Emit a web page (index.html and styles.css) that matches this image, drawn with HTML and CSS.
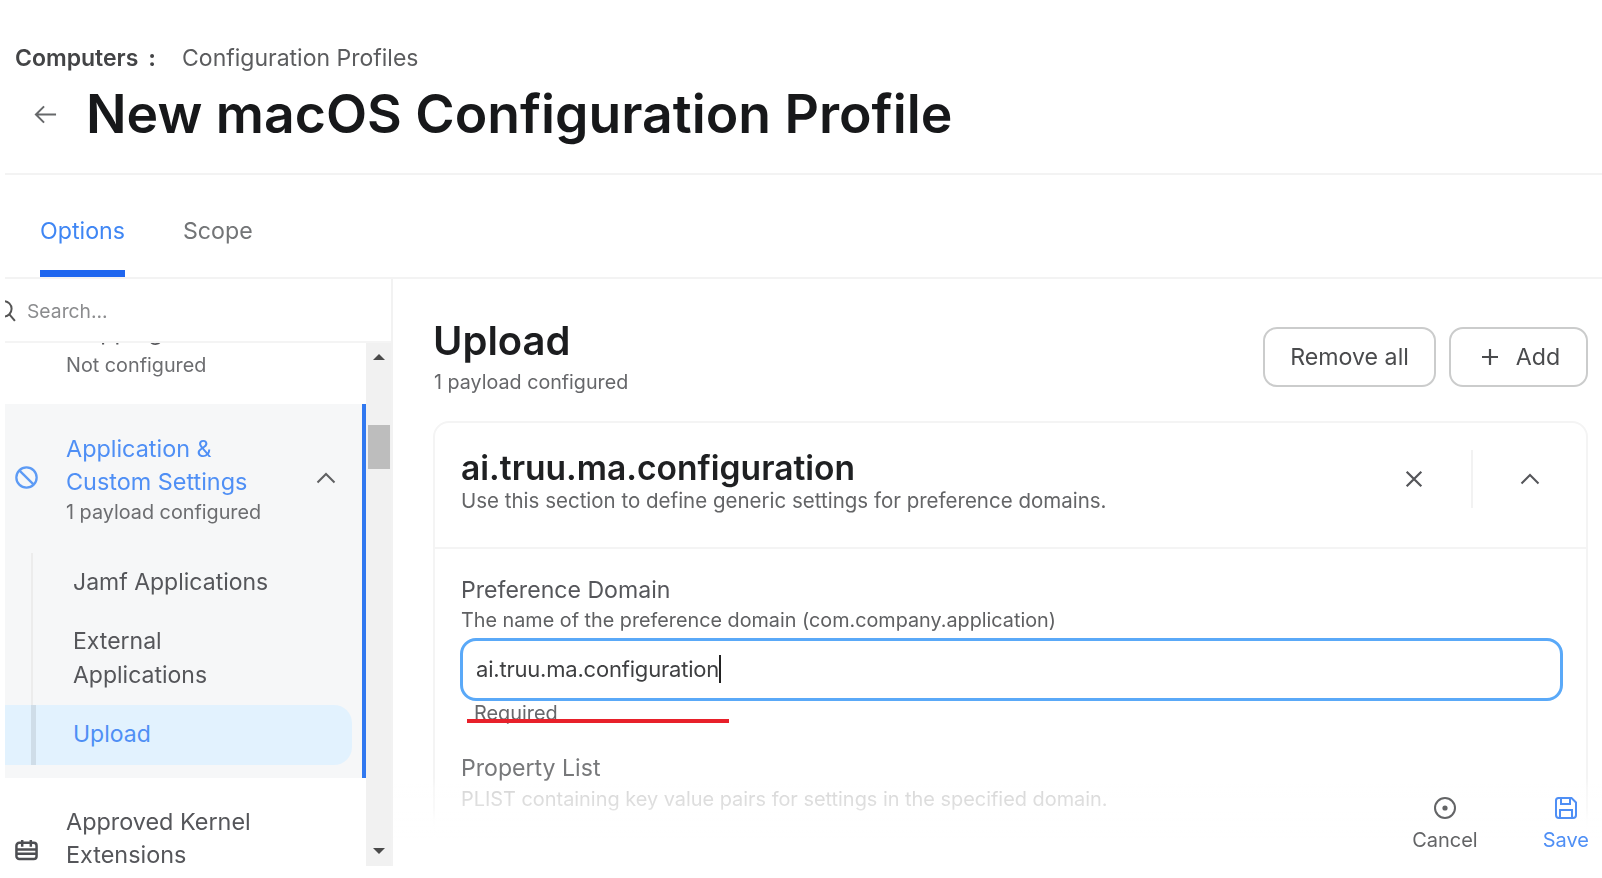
FILE: index.html
```html
<!DOCTYPE html>
<html lang="en">
<head>
  <meta charset="UTF-8">
  <meta name="viewport" content="width=device-width, initial-scale=1.0">
  <title>New macOS Configuration Profile</title>
  <link rel="stylesheet" href="styles.css">
</head>
<body>
  <div class="page">
    <header class="page-header">
      <div class="breadcrumb"><strong>Computers</strong><b class="colon">:</b><span>Configuration Profiles</span></div>
      <div class="title-row">
        <svg class="back-icon" viewBox="0 0 24 24" fill="none" stroke="currentColor" stroke-width="2.1"><path d="M23 12H2M10.5 3.5 2 12l8.5 8.5"/></svg>
        <h1>New macOS Configuration Profile</h1>
      </div>
    </header>

    <nav class="tabs">
      <a class="tab active">Options</a>
      <a class="tab">Scope</a>
    </nav>

    <div class="content">
      <aside class="sidebar">
        <div class="search">
          <svg class="search-icon" viewBox="0 0 20 20" fill="none" stroke="currentColor" stroke-width="1.8"><circle cx="-1" cy="8" r="7"/><path d="m4 13 5 6"/></svg>
          <span>Search...</span>
        </div>
        <div class="side-body">
          <div class="nav-list">
            <div class="nav-item nav-first">
              <div class="nav-text">
                <div class="nav-name">Mapping</div>
                <div class="nav-sub">Not configured</div>
              </div>
            </div>

            <div class="nav-group">
              <div class="nav-item group-head">
                <svg class="nav-icon" viewBox="0 0 24 24" fill="none" stroke="currentColor" stroke-width="2.4"><circle cx="12" cy="12" r="10.6"/><path d="M4.5 4.5 19.5 19.5"/></svg>
                <div class="nav-text">
                  <div class="nav-name">Application &amp;<br>Custom Settings</div>
                  <div class="nav-sub">1 payload configured</div>
                </div>
                <svg class="chevron" viewBox="0 0 20 12" fill="none" stroke="currentColor" stroke-width="2"><path d="M1.5 10.5 10 2l8.5 8.5"/></svg>
              </div>
              <div class="sub-list">
                <div class="sub-item">Jamf Applications</div>
                <div class="sub-item">External<br>Applications</div>
                <div class="sub-item selected">Upload</div>
              </div>
            </div>

            <div class="nav-item nav-last">
              <svg class="nav-icon dark" viewBox="0 0 24 24" fill="none" stroke="currentColor" stroke-width="2.6"><rect x="1.5" y="5" width="21" height="17" rx="3"/><path d="M1.5 12h21M1.5 16.5h21M7.5 2v7M16.5 2v7"/></svg>
              <div class="nav-text">
                <div class="nav-name">Approved Kernel<br>Extensions</div>
              </div>
            </div>
          </div>

          <div class="scrollbar">
            <span class="arrow up"></span>
            <span class="thumb"></span>
            <span class="arrow down"></span>
          </div>
        </div>
      </aside>

      <main class="main">
        <div class="main-head">
          <div>
            <h2>Upload</h2>
            <div class="main-sub">1 payload configured</div>
          </div>
          <div class="actions">
            <button class="btn remove">Remove all</button>
            <button class="btn add">
              <svg viewBox="0 0 18 18" fill="none" stroke="currentColor" stroke-width="2.2"><path d="M9 1v16M1 9h16"/></svg>
              Add
            </button>
          </div>
        </div>

        <section class="card">
          <div class="card-head">
            <div class="card-title">
              <h3>ai.truu.ma.configuration</h3>
              <p>Use this section to define generic settings for preference domains.</p>
            </div>
            <div class="card-tools">
              <span class="tool">
                <svg viewBox="0 0 16 16" fill="none" stroke="currentColor" stroke-width="2"><path d="m1.5 1.5 13 13M14.5 1.5l-13 13"/></svg>
              </span>
              <span class="tool divided">
                <svg viewBox="0 0 20 12" fill="none" stroke="currentColor" stroke-width="2"><path d="M1.5 10.5 10 2l8.5 8.5"/></svg>
              </span>
            </div>
          </div>
          <div class="card-body">
            <div class="field">
              <label>Preference Domain</label>
              <div class="hint">The name of the preference domain (com.company.application)</div>
              <div class="input"><span class="caret">ai.truu.ma.configuration</span></div>
              <div class="required">Required</div>
              <span class="red-line"></span>
            </div>
            <div class="field next">
              <label>Property List</label>
              <div class="hint">PLIST containing key value pairs for settings in the specified domain.</div>
            </div>
          </div>
        </section>

        <footer class="footer">
          <div class="foot-btn">
            <svg viewBox="0 0 24 24" fill="none" stroke="currentColor" stroke-width="2"><circle cx="12" cy="12" r="10"/><circle cx="12" cy="12" r="2.6" fill="currentColor" stroke="none"/></svg>
            <span>Cancel</span>
          </div>
          <div class="foot-btn save">
            <svg viewBox="0 0 24 24" fill="none" stroke="currentColor" stroke-width="2"><path d="M4.5 2h13L22 6.5V19a3 3 0 0 1-3 3H5a3 3 0 0 1-3-3V4.5A2.5 2.5 0 0 1 4.5 2z"/><path d="M7 2v6h9V2M6 22v-8h12v8"/></svg>
            <span>Save</span>
          </div>
        </footer>
      </main>
    </div>
  </div>
</body>
</html>
```

FILE: styles.css
```css
* {
  box-sizing: border-box;
}

html, body {
  margin: 0;
  height: 100%;
  background: #fff;
}

body {
  font-family: Inter, "Noto Sans", sans-serif;
  color: #3c3d3f;
  overflow: hidden;
}

.page {
  height: 878px;
  padding-left: 5px;
  overflow: hidden;
  display: flex;
  flex-direction: column;
  filter: blur(0.7px);
}

/* header */
.page-header {
  padding: 43px 0 27px 10px;
  border-bottom: 2px solid #f3f3f3;
}

.breadcrumb {
  display: flex;
  font-size: 23px;
  line-height: 30px;
  color: #5b5c5e;
}

.breadcrumb strong {
  font-weight: 600;
  color: #434446;
}

.colon {
  margin: 0 26px 0 10px;
  color: #434446;
}

.title-row {
  display: flex;
  align-items: center;
  margin-top: 9px;
  padding-left: 19px;
  gap: 29px;
}

.back-icon {
  width: 23px;
  height: 23px;
  color: #66686a;
}

.title-row h1 {
  margin: 0;
  font-size: 53.5px;
  line-height: 64px;
  font-weight: 600;
  color: #17181a;
}

/* tabs */
.tabs {
  display: flex;
  gap: 58px;
  padding: 40px 0 0 35px;
  border-bottom: 2px solid #f3f3f3;
}

.tab {
  font-size: 23.2px;
  line-height: 32px;
  padding-bottom: 23px;
  border-bottom: 7px solid transparent;
  color: #737577;
}

.tab.active {
  color: #3f86f4;
  border-bottom-color: #1f66ef;
}

/* layout under the tabs */
.content {
  flex: 1;
  display: grid;
  grid-template-columns: 388px 1fr;
  min-height: 0;
}

.sidebar {
  height: 587px;
  display: flex;
  flex-direction: column;
  border-right: 2px solid #f2f2f2;
}

.search {
  height: 64px;
  display: flex;
  align-items: center;
  padding-top: 2px;
  border-bottom: 2px solid #f4f4f4;
  font-size: 19.3px;
  color: #8b8c8e;
}

.search-icon {
  width: 22px;
  height: 22px;
  color: #555;
}

.side-body {
  flex: 1;
  min-height: 0;
  display: flex;
}

.nav-list {
  flex: 1;
  min-width: 0;
  overflow: hidden;
}

.nav-item {
  display: flex;
  align-items: center;
  padding: 28px 26px 28px 10px;
}

.nav-first {
  margin-top: -28px;
  padding: 0 26px 27px 61px;
}

.nav-first .nav-name {
  margin-bottom: 4px;
}

.nav-last {
  padding-top: 27px;
  align-items: flex-start;
}

.nav-last .nav-icon {
  margin-top: 33px;
}

.nav-icon {
  width: 23px;
  height: 23px;
  margin-right: 28px;
  flex: none;
  color: #5d9bf5;
}

.nav-icon.dark {
  color: #4d4e52;
}

.nav-text {
  flex: 1;
}

.nav-name {
  font-size: 23.4px;
  line-height: 33.5px;
  color: #55565a;
}

.nav-sub {
  font-size: 19.8px;
  line-height: 24px;
  color: #6c6d70;
}

.group-head .nav-sub {
  margin-top: 1px;
}

.chevron {
  width: 20px;
  height: 12px;
  color: #5f6062;
}

.nav-group {
  background: #f6f7f8;
  border-right: 4px solid #3078f0;
  padding-bottom: 13px;
}

.group-head {
  padding-bottom: 0;
}

.group-head .nav-name {
  color: #4f8ff5;
}

.sub-list {
  margin: 29px 10px 0 0;
}

.sub-item {
  position: relative;
  padding: 13px 10px 13px 68px;
  font-size: 23px;
  line-height: 33.5px;
  color: #55565a;
}

.sub-item::before {
  content: "";
  position: absolute;
  left: 26px;
  top: 0;
  bottom: 0;
  width: 2px;
  background: #ececec;
}

.sub-item.selected {
  background: #e2f2fe;
  border-radius: 0 18px 18px 0;
  color: #4f8ff5;
}

.sub-item.selected::before {
  width: 5px;
  background: #cfdde8;
}

.scrollbar {
  width: 25px;
  background: #f1f1f1;
  position: relative;
  display: flex;
  flex-direction: column;
  align-items: center;
}

.arrow {
  position: absolute;
  width: 0;
  height: 0;
  border-left: 6px solid transparent;
  border-right: 6px solid transparent;
}

.arrow.up {
  top: 11px;
  border-bottom: 6px solid #4a4a4a;
}

.arrow.down {
  bottom: 12px;
  border-top: 6px solid #4a4a4a;
}

.thumb {
  position: absolute;
  top: 82px;
  width: 22px;
  height: 44px;
  background: #bdbdbd;
}

/* main column */
.main {
  position: relative;
  overflow: hidden;
  padding: 39px 14px 0 40px;
}

.main-head {
  display: flex;
  justify-content: space-between;
  align-items: flex-start;
}

.main-head h2 {
  margin: 0;
  font-size: 40px;
  line-height: 46px;
  font-weight: 600;
  color: #1c1d1f;
}

.main-sub {
  margin-top: 6px;
  padding-left: 1px;
  font-size: 19.7px;
  line-height: 24px;
  color: #66676a;
}

.actions {
  display: flex;
  gap: 13px;
  margin-top: 9px;
}

.btn {
  height: 60px;
  border: 2px solid #cbcccc;
  border-radius: 14px;
  background: #fff;
  font-family: inherit;
  font-size: 23.2px;
  color: #4a4b4d;
  display: flex;
  align-items: center;
  justify-content: center;
}

.btn.remove {
  width: 173px;
}

.btn.add {
  width: 139px;
  gap: 17px;
  padding-left: 10px;
}

.btn svg {
  width: 18px;
  height: 18px;
}

.card {
  margin-top: 27px;
  border: 2px solid #f4f4f4;
  border-radius: 16px;
  height: 560px;
}

.card-head {
  display: flex;
  justify-content: space-between;
  padding: 25px 0 35px 26px;
  border-bottom: 2px solid #f4f4f4;
}

.card-title h3 {
  margin: 0;
  font-size: 33.6px;
  line-height: 40px;
  font-weight: 600;
  color: #1f2022;
}

.card-title p {
  margin: 2px 0 0;
  font-size: 20.5px;
  line-height: 22px;
  color: #646567;
}

.card-tools {
  display: flex;
  margin-top: 2px;
  height: 58px;
}

.tool {
  width: 115px;
  display: flex;
  align-items: center;
  justify-content: center;
  color: #55565a;
}

.tool.divided {
  border-left: 2px solid #f2f2f2;
}

.tool svg {
  width: 18px;
  height: 18px;
}

.tool.divided svg {
  width: 20px;
}

.card-body {
  padding: 27px 23px 0 26px;
}

.field {
  position: relative;
}

.field label {
  display: block;
  font-size: 23.1px;
  line-height: 28px;
  color: #55565a;
}

.hint {
  margin-top: 5px;
  font-size: 19.8px;
  line-height: 22px;
  color: #5f6062;
}

.input {
  margin: 7px 0 0 -1px;
  height: 63px;
  display: flex;
  align-items: center;
  padding: 0 0 2px 13px;
  border: 3px solid #5aa9f8;
  border-radius: 16px;
  font-size: 22px;
  color: #3e3f41;
  letter-spacing: -0.2px;
}

.caret {
  border-right: 2px solid #222;
  line-height: 28px;
}

.required {
  margin-top: 1px;
  padding-left: 13px;
  font-size: 19.9px;
  line-height: 22px;
  color: #66676a;
}

.red-line {
  position: absolute;
  left: 6px;
  bottom: 1px;
  width: 262px;
  height: 4px;
  background: #e8202a;
}

.field.next {
  margin-top: 30px;
}

.field.next label {
  color: #77787a;
}

.field.next .hint {
  margin-top: 6px;
  font-size: 19.9px;
  color: #c2c2c2;
}

/* sticky footer fading over the form */
.footer {
  position: absolute;
  left: 0;
  right: 0;
  bottom: 0;
  height: 100px;
  padding: 18px 13px 0 0;
  display: flex;
  justify-content: flex-end;
  align-items: flex-start;
  gap: 65px;
  background: linear-gradient(to bottom, rgba(255, 255, 255, 0), rgba(255, 255, 255, 0.35) 10px, rgba(255, 255, 255, 0.5) 30px, rgba(255, 255, 255, 0.95) 44px, #fff 60px);
}

.foot-btn {
  display: flex;
  flex-direction: column;
  align-items: center;
  gap: 8px;
  font-size: 20px;
  line-height: 24px;
  color: #636466;
}

.foot-btn svg {
  width: 24px;
  height: 24px;
}

.foot-btn.save {
  color: #4f8ff5;
}
```
